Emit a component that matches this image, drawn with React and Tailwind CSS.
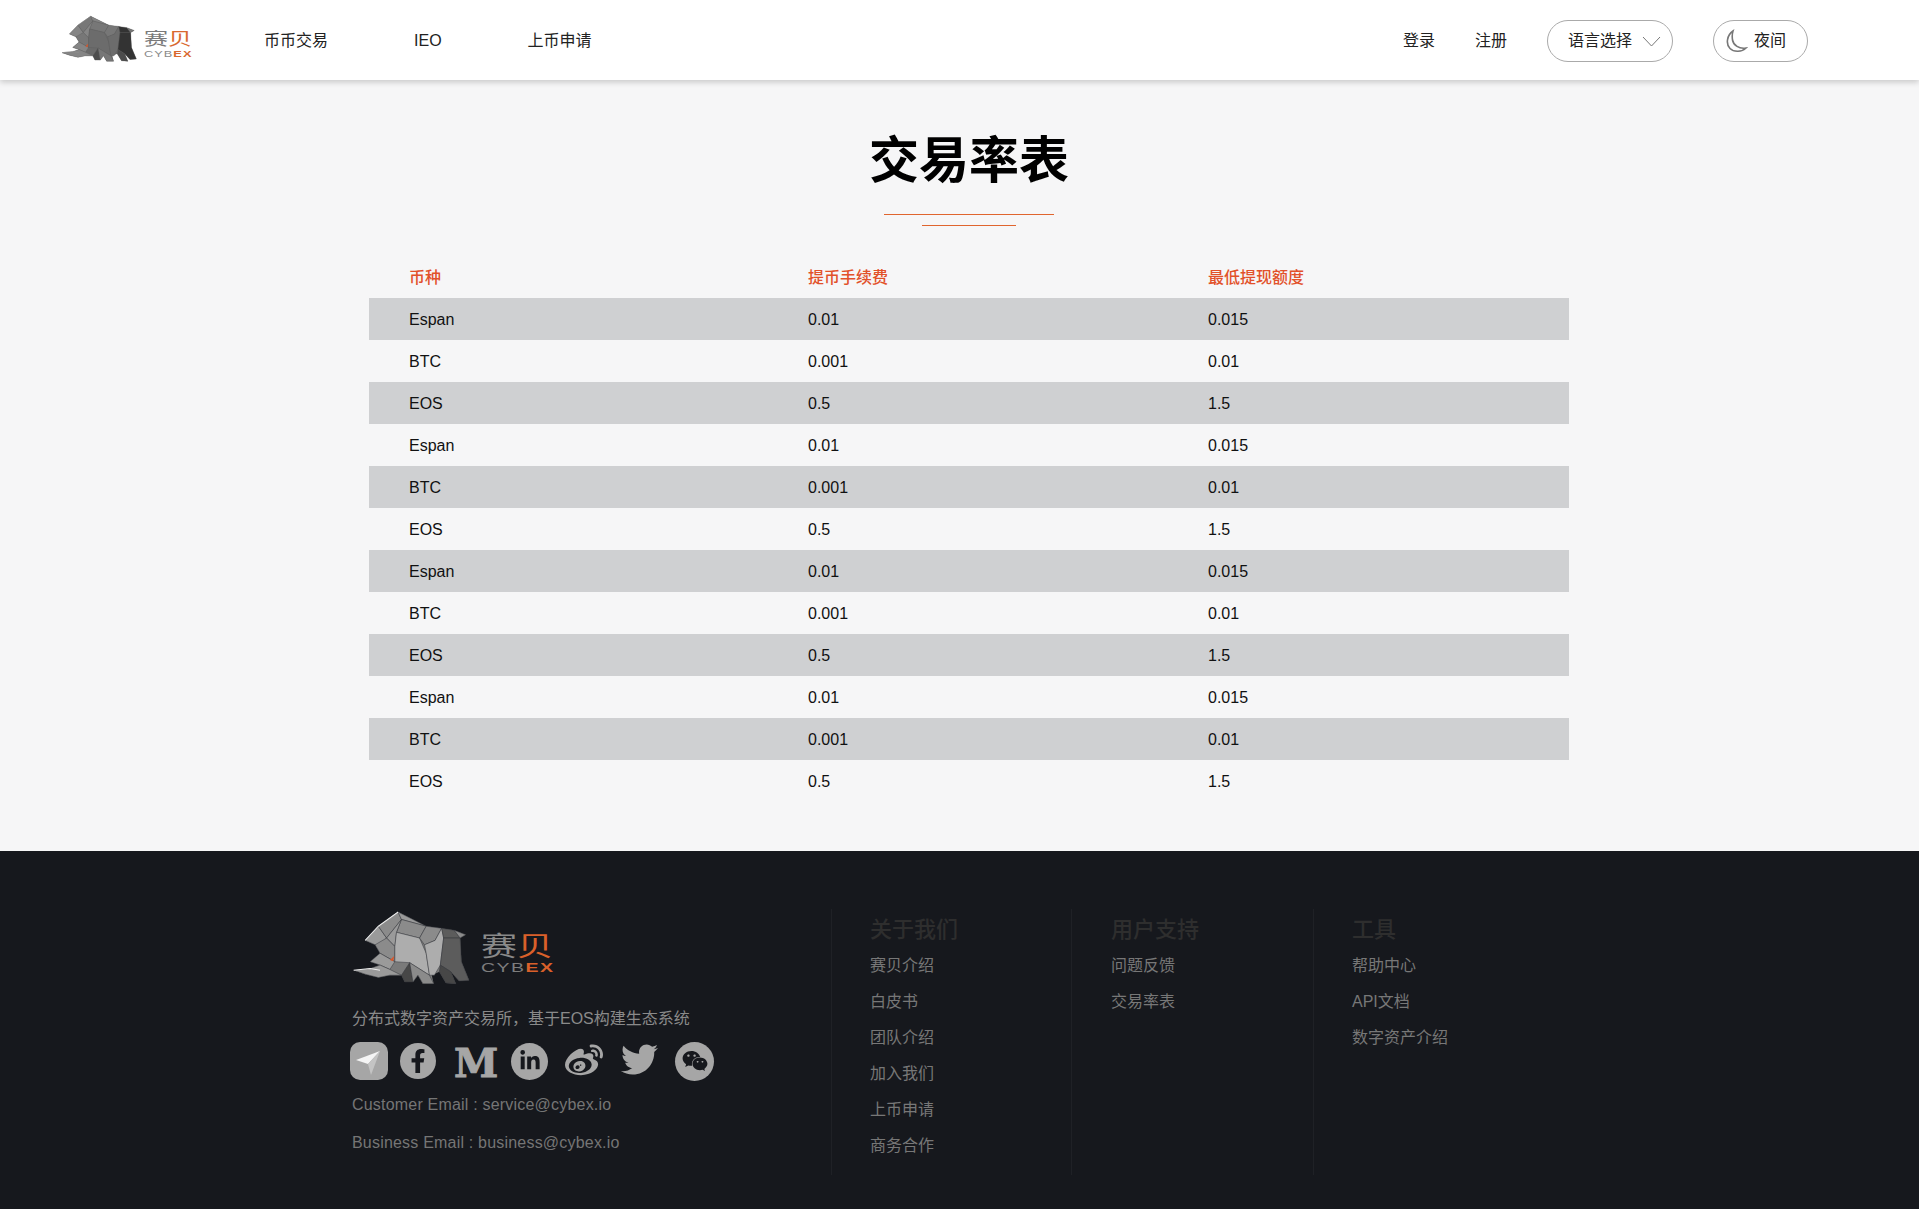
// App.jsx
import React from 'react';
import { FaFacebookF, FaLinkedinIn, FaWeibo, FaTwitter, FaWeixin } from 'react-icons/fa';

const FONT = "[font-family:'Liberation_Sans','Noto_Sans_CJK_SC',sans-serif]";

const rows = [
  ['Espan', '0.01', '0.015'],
  ['BTC', '0.001', '0.01'],
  ['EOS', '0.5', '1.5'],
];

const columns = [
  { title: '关于我们', box: 'w-[240px] pl-[38px]', links: ['赛贝介绍', '白皮书', '团队介绍', '加入我们', '上币申请', '商务合作'] },
  { title: '用户支持', box: 'w-[242px] pl-[39px]', links: ['问题反馈', '交易率表'] },
  { title: '工具', box: 'w-[240px] pl-[38px]', links: ['帮助中心', 'API文档', '数字资产介绍'] },
];

const SILHOUETTE =
  '160,28 245,70 330,82 365,95 348,105 352,175 375,230 345,232 320,205 335,240 305,238 285,205 262,215 268,240 235,240 220,215 205,235 180,235 170,215 135,215 100,222 60,212 25,200 75,195 105,185 75,175 105,150 90,125 60,112 100,70';

const Rhino = ({ className, dark }) => {
  const c = dark
    ? { base: '#6a6a6a', a: '#777', b: '#858585', c: '#6c6c6c', d: '#333', e: '#4c4c4c', line: '#5a5a5a', hi: '#8f8f8f' }
    : { base: '#7a7a7a', a: '#8b8b8b', b: '#9a9a9a', c: '#adadad', d: '#5c5c5c', e: '#474747', line: '#33353a', hi: '#ededed' };
  const polys = [
    ['60,112 100,70 125,105 100,130 90,125', c.b],
    ['100,70 160,28 170,50 125,105', c.a],
    ['160,28 205,50 245,70 170,50', c.b],
    ['170,50 245,70 225,105 155,88', c.a],
    ['125,105 170,50 155,88 150,130', c.b],
    ['90,125 125,105 150,130 150,175 105,150', c.a],
    ['75,175 105,150 150,175 135,198 105,185', c.b],
    ['25,200 75,195 105,185 135,198 170,215 135,215 100,222 60,212', c.b],
    ['155,88 225,105 245,150 255,215 195,178 150,175 150,130', c.c],
    ['245,70 292,76 272,112 240,125 225,105', c.a],
    ['240,125 272,112 292,76 298,105 288,185 270,215 255,215 245,150', c.c],
    ['292,76 330,82 348,105 298,105', c.d],
    ['298,105 348,105 352,175 375,230 345,232 320,205 288,185', c.d],
    ['170,215 195,178 205,235 180,235', c.e],
    ['195,178 255,215 268,240 235,240 220,215 205,235', c.a],
    ['288,185 320,205 335,240 305,238 285,205', c.e],
    ['330,82 365,95 348,105', c.a],
  ];
  return (
    <svg className={className} viewBox="20 22 358 222" preserveAspectRatio="none">
      <polygon points={SILHOUETTE} fill={c.base} />
      {polys.map(([points, fill], i) => (
        <polygon key={i} points={points} fill={fill} stroke={c.line} strokeWidth={1.5} strokeLinejoin="round" />
      ))}
      <polyline points="60,112 100,70 160,28" fill="none" stroke={c.hi} strokeWidth={3} />
      <polyline points="25,200 75,195 105,200" fill="none" stroke={c.hi} strokeWidth={3} />
      <polygon points="135,170 148,158 145,174" fill="#d9562a" />
    </svg>
  );
};

const Telegram = () => (
  <div className="w-[38px] h-[38px] rounded-[10px] bg-[#a6a6a6]">
    <svg className="w-full h-full" viewBox="0 0 38 38">
      <polygon points="6,18 30,9 18,22" fill="#f5f5f5" />
      <polygon points="18,22 30,9 21,33" fill="#c4c4c4" />
    </svg>
  </div>
);

const CircleIcon = ({ children, className }) => (
  <div className={`rounded-full bg-[#a6a6a6] flex items-center justify-center text-[#16181d] ${className}`}>
    {children}
  </div>
);

const Logo = ({ small }) =>
  small ? (
    <div className="flex items-start h-[47px]">
      <Rhino className="w-[76px] h-[47px] -translate-y-[3px]" dark />
      <div className="ml-[7px] w-[49px] pt-[14px]">
        <div className="h-[14px] text-[24px] leading-[14px] whitespace-nowrap text-[#7a7a7a] scale-y-[0.72]">
          赛<span className="text-[#d9692f]">贝</span>
        </div>
        <div className="mt-[5px] h-[6px] text-[8.500px] leading-[6px] tracking-[0.7px] text-[#8a8a8a] whitespace-nowrap origin-left scale-x-[1.5]">
          CYB<span className="text-[#d9692f] font-bold">EX</span>
        </div>
      </div>
    </div>
  ) : (
    <div className="flex items-start h-[73px]">
      <Rhino className="w-[118px] h-[75px] -translate-y-[2px]" />
      <div className="ml-[11px] w-[73px] pt-[21px]">
        <div className="h-[27px] text-[36px] leading-[27px] whitespace-nowrap text-[#8a8a8a] scale-y-[0.75]">
          赛<span className="text-[#d9602a]">贝</span>
        </div>
        <div className="mt-[3px] h-[10px] text-[13px] leading-[10px] tracking-[1px] text-[#7d7d7d] whitespace-nowrap origin-left scale-x-[1.5]">
          CYB<span className="text-[#d9602a] font-bold">EX</span>
        </div>
      </div>
    </div>
  );

const Header = () => (
  <header className="relative z-10 h-20 bg-white flex items-center pt-[2px] pl-[61px] pr-[111px] shadow-[0_2px_6px_rgba(0,0,0,0.2)] text-base text-[#222]">
    <Logo small />
    <nav className="ml-[71px] flex gap-[86px]">
      <span>币币交易</span>
      <span>IEO</span>
      <span>上币申请</span>
    </nav>
    <div className="ml-auto flex items-center">
      <span>登录</span>
      <span className="ml-10">注册</span>
      <button className="ml-10 w-[126px] h-[42px] pl-5 rounded-full border border-[#aaa] flex items-center">
        语言选择
        <svg className="ml-[10px] w-[19px] h-[11px]" fill="none" stroke="#777" viewBox="0 0 19 11">
          <path d="M1 1l8.5 9L18 1" />
        </svg>
      </button>
      <button className="ml-10 w-[95px] h-[42px] pl-[10px] rounded-full border border-[#aaa] flex items-center">
        <svg className="w-6 h-6" fill="none" stroke="#777" strokeWidth={1.6} viewBox="0 0 24 24">
          <path d="M9 2C3 6 1.500 15 6 19.500C10 23.500 18 23 22 19C15 20 9.500 16.500 8.500 11C8 7.500 8.200 4.500 9 2z" />
        </svg>
        <span className="ml-[6px]">夜间</span>
      </button>
    </div>
  </header>
);

const RateTable = () => (
  <table className="w-[1200px] mx-auto table-fixed text-base">
    <thead>
      <tr className="h-10 text-[#e2512a] text-left">
        <th className="w-[439px] pl-10 font-medium">币种</th>
        <th className="w-[400px] font-medium">提币手续费</th>
        <th className="font-medium">最低提现额度</th>
      </tr>
    </thead>
    <tbody className="text-[#111]">
      {[0, 1, 2, 3].flatMap(() => rows).map((row, i) => (
        <tr key={i} className={`h-[42px] ${i % 2 === 0 ? 'bg-[#cfd0d2]' : ''}`}>
          <td className="pl-10 pt-[2px]">{row[0]}</td>
          <td className="pt-[2px]">{row[1]}</td>
          <td className="pt-[2px]">{row[2]}</td>
        </tr>
      ))}
    </tbody>
  </table>
);

const Footer = () => (
  <footer className="h-[358px] bg-[#16181d] flex pl-[352px] pt-[58px]">
    <div className="w-[479px] pt-[3px]">
      <Logo />
      <p className="mt-[22px] text-base leading-6 text-[#8a8a8a]">分布式数字资产交易所，基于EOS构建生态系统</p>
      <div className="mt-[11px] -ml-[2px] flex items-center h-[38px] text-[#a6a6a6]">
        <Telegram />
        <CircleIcon className="ml-3 w-[36px] h-[36px]"><FaFacebookF size={24} /></CircleIcon>
        <span className="ml-[18px] w-10 text-[40px] leading-[38px] font-bold text-center translate-y-[2px] [font-family:'DejaVu_Serif',serif] [-webkit-text-stroke:1px_#a6a6a6]">M</span>
        <CircleIcon className="ml-[17px] w-[37px] h-[37px]"><FaLinkedinIn size={22} /></CircleIcon>
        <FaWeibo className="ml-[17px]" size={38} />
        <FaTwitter className="ml-[18px] -translate-y-[2px]" size={37} />
        <CircleIcon className="ml-[17px] w-[39px] h-[39px]"><FaWeixin size={26} /></CircleIcon>
      </div>
      <p className="mt-[13px] text-base leading-6 tracking-[0.2px] text-[#757575]">Customer Email : service@cybex.io</p>
      <p className="mt-[14px] text-base leading-6 tracking-[0.2px] text-[#757575]">Business Email : business@cybex.io</p>
    </div>
    {columns.map((col) => (
      <div key={col.title} className={`${col.box} h-[266px] border-l border-[#1f2126] pt-[6px]`}>
        <h3 className="text-[22px] leading-[30px] font-medium text-[#2e2e2e]">{col.title}</h3>
        <ul className="mt-[3px] text-base text-[#777]">
          {col.links.map((link) => (
            <li key={link} className="h-9 leading-9">{link}</li>
          ))}
        </ul>
      </div>
    ))}
  </footer>
);

const App = () => (
  <div className={`min-h-[1209px] bg-[#f6f6f7] ${FONT}`}>
    <Header />
    <main className="h-[771px] pt-[51px] pl-[19px]">
      <h1 className="text-center text-[50px] leading-[60px] font-bold text-black">交易率表</h1>
      <div className="mt-[23px] mx-auto w-[170px] h-px bg-[#e0652e]" />
      <div className="mt-[10px] mx-auto w-[94px] h-px bg-[#e0652e]" />
      <div className="mt-[32px]">
        <RateTable />
      </div>
    </main>
    <Footer />
  </div>
);

export default App;
